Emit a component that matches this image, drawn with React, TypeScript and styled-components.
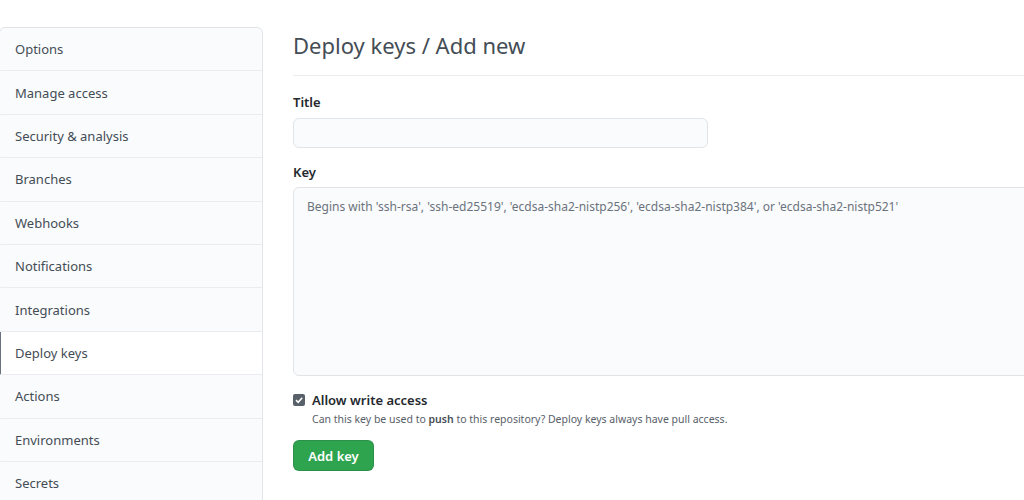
import React from "react";
import styled, { createGlobalStyle } from "styled-components";

const Global = createGlobalStyle`
  html, body { margin: 0; padding: 0; background: #fff; }
  body { font-family: "Noto Sans", "Open Sans", sans-serif; color: #24292e; overflow: hidden; }
`;

const Page = styled.div`
  display: flex;
  align-items: flex-start;
  gap: 30px;
  padding-top: 27px;
  width: 1100px;
`;

const Sidebar = styled.nav`
  width: 262px;
  margin-left: -1px;
  flex: none;
  border: 1px solid #e1e4e8;
  border-radius: 6px;
  background: #fafbfc;
  overflow: hidden;
`;

const NavItem = styled.div<{ $active?: boolean }>`
  height: 42.4px;
  display: flex;
  align-items: center;
  padding-left: 14px;
  font-size: 13px;
  color: #444d56;
  border-bottom: 1px solid #eaecef;
  background: ${(p) => (p.$active ? "#fff" : "transparent")};
  border-left: 2px solid ${(p) => (p.$active ? "#6a737d" : "transparent")};
  margin-left: -1px;
`;

const Main = styled.main`
  flex: 1;
  display: flex;
  flex-direction: column;
`;

const Heading = styled.h2`
  margin: 0;
  font-size: 22px;
  font-weight: 400;
  color: #444d56;
  line-height: 36px;
  padding-bottom: 12px;
  border-bottom: 1px solid #eaecef;
`;

const Label = styled.label<{ $first?: boolean }>`
  font-size: 13px;
  font-weight: 600;
  color: #24292e;
  display: block;
  margin: ${(p) => (p.$first ? "16px 0 6px" : "14px 0 5px")};
  line-height: 20px;
`;

const Input = styled.input`
  width: 415px;
  height: 30px;
  box-sizing: border-box;
  border: 1px solid #e1e4e8;
  border-radius: 6px;
  background: #fafbfc;
  outline: none;
`;

const TextArea = styled.textarea`
  width: 760px;
  height: 189px;
  box-sizing: border-box;
  border: 1px solid #e1e4e8;
  border-radius: 6px;
  background: #fafbfc;
  padding: 10px 13px;
  resize: none;
  outline: none;
  font-family: "Noto Sans", "Open Sans", sans-serif;
  font-size: 12px;
  color: #24292e;
  &::placeholder { color: #6a737d; }
`;

const CheckRow = styled.div`
  display: flex;
  align-items: center;
  gap: 7px;
  margin-top: 15px;
`;

const Box = styled.span`
  width: 12px;
  height: 12px;
  border-radius: 2px;
  background: #586069;
  display: inline-flex;
  align-items: center;
  justify-content: center;
`;

const CheckLabel = styled.span`
  font-size: 13px;
  font-weight: 600;
  color: #24292e;
`;

const Note = styled.p`
  margin: 3px 0 0 19px;
  font-size: 10.5px;
  color: #586069;
  b { font-weight: 600; color: #444d56; }
`;

const Button = styled.button`
  margin-top: 14px;
  width: 81px;
  height: 31px;
  border-radius: 6px;
  border: 1px solid rgba(27, 31, 35, 0.15);
  background: #2ea44f;
  color: #fff;
  font-family: "Noto Sans", "Open Sans", sans-serif;
  font-size: 13px;
  font-weight: 600;
  cursor: pointer;
`;

const items = [
  "Options",
  "Manage access",
  "Security & analysis",
  "Branches",
  "Webhooks",
  "Notifications",
  "Integrations",
  "Deploy keys",
  "Actions",
  "Environments",
  "Secrets",
];

export default function App() {
  return (
    <>
      <Global />
      <Page>
        <Sidebar>
          {items.map((t) => (
            <NavItem key={t} $active={t === "Deploy keys"}>
              {t}
            </NavItem>
          ))}
        </Sidebar>
        <Main>
          <Heading>Deploy keys / Add new</Heading>
          <Label $first>Title</Label>
          <Input />
          <Label>Key</Label>
          <TextArea placeholder="Begins with 'ssh-rsa', 'ssh-ed25519', 'ecdsa-sha2-nistp256', 'ecdsa-sha2-nistp384', or 'ecdsa-sha2-nistp521'" />
          <CheckRow>
            <Box>
              <svg width="10" height="10" viewBox="0 0 10 10">
                <path d="M2 5.2 L4.2 7.3 L8.2 2.8" stroke="#fff" strokeWidth="1.6" fill="none" />
              </svg>
            </Box>
            <CheckLabel>Allow write access</CheckLabel>
          </CheckRow>
          <Note>
            Can this key be used to <b>push</b> to this repository? Deploy keys always have pull access.
          </Note>
          <div>
            <Button>Add key</Button>
          </div>
        </Main>
      </Page>
    </>
  );
}
